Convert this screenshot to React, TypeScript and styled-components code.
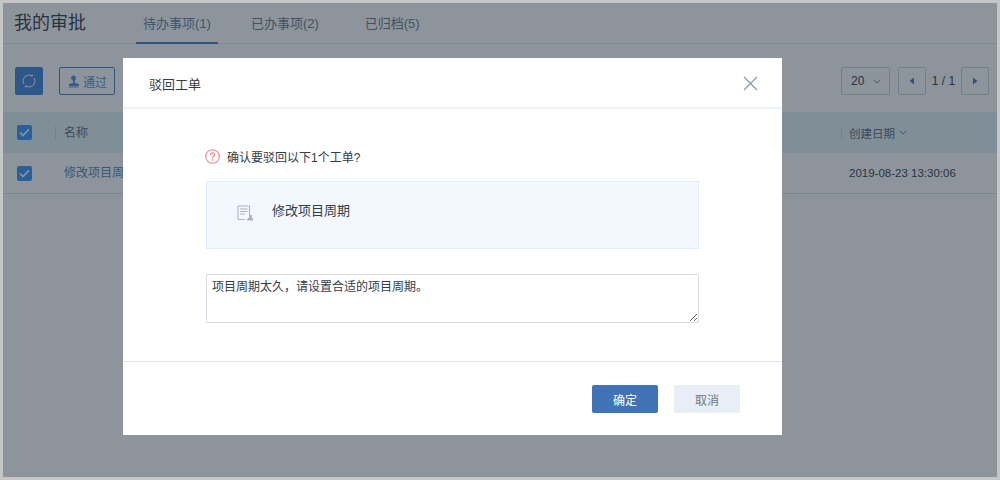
import React from "react";
import styled, { createGlobalStyle } from "styled-components";

const Global = createGlobalStyle`
  html, body { margin: 0; padding: 0; background: #fff; }
  body { font-family: "Liberation Sans", "Noto Sans CJK SC", sans-serif; color: #333; }
  * { box-sizing: border-box; }
`;

const Frame = styled.div`
  position: relative;
  width: 1000px;
  height: 480px;
  border: 3px solid #c6c6c6;
  background: #fff;
  overflow: hidden;
`;

const Header = styled.header`
  display: flex;
  align-items: stretch;
  height: 41px;
  padding-left: 11px;
  border-bottom: 1px solid #e6ebf0;
`;

const PageTitle = styled.h1`
  margin: 0 50px 0 0;
  font-size: 18px;
  font-weight: 400;
  line-height: 40px;
  color: #333c48;
`;

const Tab = styled.div<{ $active?: boolean; $gap: number }>`
  margin-right: ${(p) => p.$gap}px;
  padding: 0 7px;
  font-size: 13px;
  line-height: 41px;
  color: ${(p) => (p.$active ? "#5b84b0" : "#6b7787")};
  border-bottom: 2px solid ${(p) => (p.$active ? "#3f80cc" : "transparent")};
  height: 41px;
`;

const Toolbar = styled.div`
  display: flex;
  align-items: center;
  height: 28px;
  margin-top: 23px;
  padding: 0 8px 0 12px;
`;

const RefreshButton = styled.div`
  display: flex;
  align-items: center;
  justify-content: center;
  width: 28px;
  height: 28px;
  margin-right: 16px;
  border-radius: 2px;
  background: #3f85d8;
`;

const OutlineButton = styled.div`
  display: flex;
  align-items: center;
  justify-content: center;
  gap: 3px;
  width: 56px;
  height: 28px;
  border: 1px solid #3f80cc;
  border-radius: 2px;
  font-size: 12px;
  color: #5b8fc8;
`;

const Spacer = styled.div`
  flex: 1;
`;

const PageSelect = styled.div`
  display: flex;
  align-items: center;
  justify-content: space-between;
  width: 49px;
  height: 28px;
  margin-right: 8px;
  padding: 0 8px 0 9px;
  border: 1px solid #ccd5de;
  border-radius: 2px;
  font-size: 12px;
  color: #333c48;
`;

const PageButton = styled.div`
  display: flex;
  align-items: center;
  justify-content: center;
  width: 28px;
  height: 28px;
  border: 1px solid #ccd5de;
  border-radius: 2px;
`;

const PageText = styled.div`
  width: 35px;
  text-align: center;
  font-size: 12px;
  color: #333c48;
`;

const Row = styled.div<{ $head?: boolean }>`
  display: flex;
  align-items: center;
  height: 41px;
  padding-left: 14px;
  background: ${(p) => (p.$head ? "#e4f3f9" : "#fff")};
  border-bottom: ${(p) => (p.$head ? "none" : "1px solid #dfe5ea")};
  font-size: 12px;
  color: ${(p) => (p.$head ? "#5e6a78" : "#333c48")};
`;

const Table = styled.div`
  margin-top: 17px;
`;

const Check = styled.div`
  display: flex;
  align-items: center;
  justify-content: center;
  flex: none;
  width: 15px;
  height: 15px;
  border-radius: 2px;
  background: #3399ff;
`;

const NameCell = styled.div<{ $head?: boolean }>`
  flex: 1;
  margin-left: ${(p) => (p.$head ? 23 : 32)}px;
  padding-left: ${(p) => (p.$head ? 8 : 0)}px;
  height: 14px;
  line-height: 14px;
  border-left: ${(p) => (p.$head ? "1px solid #cfdde4" : "none")};
  color: ${(p) => (p.$head ? "#5e6a78" : "#5b84b0")};
`;

const DateCell = styled.div<{ $head?: boolean }>`
  display: flex;
  align-items: center;
  gap: 4px;
  width: 156px;
  height: 14px;
  padding-left: 7px;
  border-left: ${(p) => (p.$head ? "1px solid #cfdde4" : "1px solid transparent")};
  font-size: 11.5px;
`;

const Overlay = styled.div`
  position: absolute;
  inset: 0;
  background: rgba(27, 41, 55, 0.5);
`;

const Modal = styled.div`
  position: absolute;
  left: 120px;
  top: 55px;
  display: flex;
  flex-direction: column;
  width: 659px;
  height: 377px;
  background: #fff;
`;

const ModalHeader = styled.div`
  display: flex;
  align-items: center;
  justify-content: space-between;
  height: 51px;
  padding: 2px 24px 0 26px;
  border-bottom: 2px solid #eef1f5;
`;

const ModalTitle = styled.div`
  font-size: 13px;
  color: #333c48;
`;

const CloseIcon = styled.svg`
  margin-bottom: 1px;
`;

const ModalBody = styled.div`
  flex: 1;
  padding: 39px 83px 0;
`;

const Question = styled.div`
  display: flex;
  align-items: center;
  gap: 7px;
  height: 16px;
  margin-left: -1px;
  font-size: 12px;
  color: #333c48;
`;

const TicketBox = styled.div`
  display: flex;
  align-items: center;
  gap: 18px;
  height: 68px;
  margin-top: 17px;
  padding: 0 0 12px 30px;
  background: #f2f8fe;
  border: 1px solid #dfeef9;
  font-size: 13px;
  color: #333c48;
`;

const DocIcon = styled.svg`
  margin-top: 8px;
`;

const Reason = styled.textarea`
  display: block;
  width: 493px;
  height: 49px;
  margin-top: 25px;
  padding: 4px 5px;
  border: 1px solid #d9dfe6;
  border-radius: 1px;
  outline: none;
  resize: vertical;
  font-family: "Liberation Sans", "Noto Sans CJK SC", sans-serif;
  font-size: 12px;
  line-height: 16px;
  color: #333c48;
`;

const ModalFooter = styled.div`
  display: flex;
  justify-content: flex-end;
  gap: 16px;
  height: 74px;
  padding: 23px 42px 0 0;
  border-top: 1px solid #e2e5e8;
`;

const FooterButton = styled.div<{ $primary?: boolean }>`
  display: flex;
  align-items: center;
  justify-content: center;
  width: 66px;
  height: 28px;
  border-radius: 2px;
  font-size: 12px;
  background: ${(p) => (p.$primary ? "#3f73b5" : "#e8eef5")};
  color: ${(p) => (p.$primary ? "#fff" : "#6b7787")};
`;

const Tick = () => (
  <svg width="11" height="9" viewBox="0 0 11 9" fill="none">
    <path d="M1 4.5 4 7.5 10 1.2" stroke="#fff" strokeWidth="1.6" />
  </svg>
);

const Triangle = ({ left }: { left?: boolean }) => (
  <svg width="6" height="8" viewBox="0 0 6 8">
    <path d={left ? "M5 0.5V7.5L0.5 4Z" : "M1 0.5V7.5L5.5 4Z"} fill="#3f80cc" />
  </svg>
);

const Chevron = ({ color }: { color: string }) => (
  <svg width="8" height="5" viewBox="0 0 8 5" fill="none">
    <path d="M0.7 0.8 4 4 7.3 0.8" stroke={color} />
  </svg>
);

export default function App() {
  return (
    <Frame>
      <Global />
      <Header>
        <PageTitle>我的审批</PageTitle>
        <Tab $active $gap={26}>待办事项(1)</Tab>
        <Tab $gap={32}>已办事项(2)</Tab>
        <Tab $gap={0}>已归档(5)</Tab>
      </Header>
      <Toolbar>
        <RefreshButton>
          <svg width="16" height="16" viewBox="0 0 16 16" fill="none" stroke="#fff" strokeWidth="1">
            <path d="M2.8 11A6 6 0 0 1 11 2.8" />
            <path d="M13.2 5A6 6 0 0 1 5 13.2" />
            <path d="M11.8 1.6 11.2 3.2 9.6 2.6" />
            <path d="M4.2 14.4 4.8 12.8 6.4 13.4" />
          </svg>
        </RefreshButton>
        <OutlineButton>
          <svg width="13" height="13" viewBox="0 0 13 13" fill="#5b8fd0">
            <path d="M6.5 0.5C8 0.5 9 1.6 9 3c0 1.3-.9 2.2-1.2 3.4-.1.6 0 1.3.6 1.5l2.9.8c.6.2.9.6.9 1.3v1H1.8v-1c0-.7.3-1.1.9-1.3l2.9-.8c.6-.2.7-.9.6-1.5C5.9 5.2 4 4.3 4 3c0-1.4 1-2.5 2.5-2.5z" />
            <rect x="1.8" y="11.5" width="9.4" height="1" />
          </svg>
          通过
        </OutlineButton>
        <Spacer />
        <PageSelect>
          20
          <Chevron color="#7a8794" />
        </PageSelect>
        <PageButton><Triangle left /></PageButton>
        <PageText>1 / 1</PageText>
        <PageButton><Triangle /></PageButton>
      </Toolbar>
      <Table>
        <Row $head>
          <Check><Tick /></Check>
          <NameCell $head>名称</NameCell>
          <DateCell $head>
            创建日期
            <Chevron color="#5b84b0" />
          </DateCell>
        </Row>
        <Row>
          <Check><Tick /></Check>
          <NameCell>修改项目周期</NameCell>
          <DateCell>2019-08-23 13:30:06</DateCell>
        </Row>
      </Table>
      <Overlay />
      <Modal>
        <ModalHeader>
          <ModalTitle>驳回工单</ModalTitle>
          <CloseIcon width="15" height="15" viewBox="0 0 15 15" fill="none" stroke="#8a9bb0" strokeWidth="1.3">
            <path d="M1 1 14 14M14 1 1 14" />
          </CloseIcon>
        </ModalHeader>
        <ModalBody>
          <Question>
            <svg width="15" height="15" viewBox="0 0 15 15" fill="none">
              <circle cx="7.5" cy="7.5" r="6.8" stroke="#f0868c" strokeWidth="1.1" />
              <path d="M5.4 5.9C5.4 4.6 6.4 3.9 7.5 3.9S9.6 4.6 9.6 5.8C9.6 7.2 7.5 7.4 7.5 9.2" stroke="#f0868c" strokeWidth="1.2" />
              <circle cx="7.5" cy="11" r="0.8" fill="#f0868c" />
            </svg>
            确认要驳回以下1个工单?
          </Question>
          <TicketBox>
            <DocIcon width="17" height="16" viewBox="0 0 17 16" fill="none" stroke="#a9b4c0">
              <path d="M12.5 10V1H1V14.5H8" />
              <path d="M3 4H10.5M3 6.5H10.5M3 9H8" />
              <path d="M10 15H16L14.5 12.5V10.5H12.5V12.5Z" fill="#a9b4c0" />
            </DocIcon>
            修改项目周期
          </TicketBox>
          <Reason defaultValue="项目周期太久，请设置合适的项目周期。" />
        </ModalBody>
        <ModalFooter>
          <FooterButton $primary>确定</FooterButton>
          <FooterButton>取消</FooterButton>
        </ModalFooter>
      </Modal>
    </Frame>
  );
}
